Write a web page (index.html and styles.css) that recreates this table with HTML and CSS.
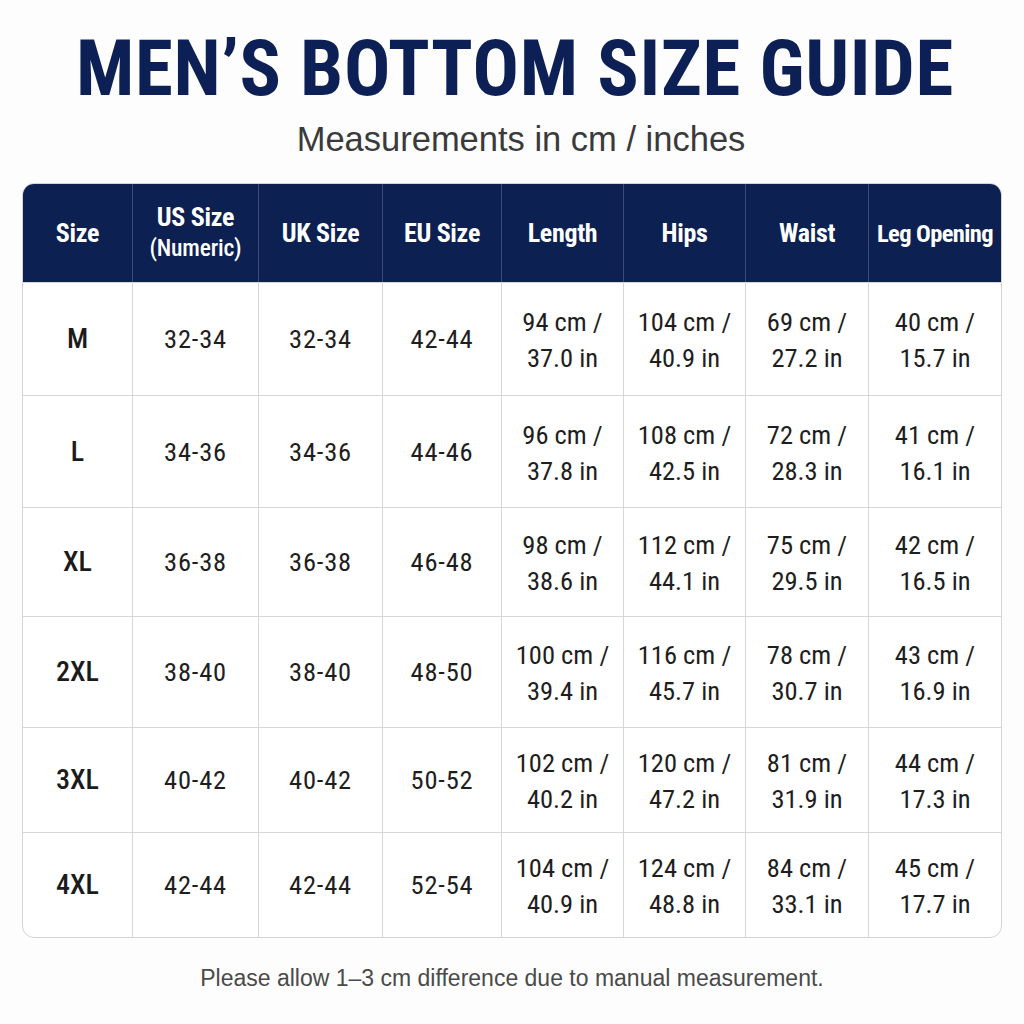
FILE: index.html
```html
<!DOCTYPE html>
<html>
<head>
<meta charset="utf-8">
<link rel="stylesheet" href="styles.css">
</head>
<body>
<div class="page">
  <h1 class="title"><span>MEN’S BOTTOM SIZE GUIDE</span></h1>
  <p class="subtitle">Measurements in cm / inches</p>
  <div class="table">
    <div class="row head">
      <div class="c">Size</div>
      <div class="c">US Size<br><span class="sub">(Numeric)</span></div>
      <div class="c">UK Size</div>
      <div class="c">EU Size</div>
      <div class="c">Length</div>
      <div class="c">Hips</div>
      <div class="c">Waist</div>
      <div class="c leg">Leg Opening</div>
    </div>
    <div class="row">
      <div class="c sz">M</div><div class="c r">32-34</div><div class="c r">32-34</div><div class="c r">42-44</div>
      <div class="c">94 cm /<br>37.0 in</div><div class="c">104 cm /<br>40.9 in</div><div class="c">69 cm /<br>27.2 in</div><div class="c">40 cm /<br>15.7 in</div>
    </div>
    <div class="row">
      <div class="c sz">L</div><div class="c r">34-36</div><div class="c r">34-36</div><div class="c r">44-46</div>
      <div class="c">96 cm /<br>37.8 in</div><div class="c">108 cm /<br>42.5 in</div><div class="c">72 cm /<br>28.3 in</div><div class="c">41 cm /<br>16.1 in</div>
    </div>
    <div class="row">
      <div class="c sz">XL</div><div class="c r">36-38</div><div class="c r">36-38</div><div class="c r">46-48</div>
      <div class="c">98 cm /<br>38.6 in</div><div class="c">112 cm /<br>44.1 in</div><div class="c">75 cm /<br>29.5 in</div><div class="c">42 cm /<br>16.5 in</div>
    </div>
    <div class="row">
      <div class="c sz">2XL</div><div class="c r">38-40</div><div class="c r">38-40</div><div class="c r">48-50</div>
      <div class="c">100 cm /<br>39.4 in</div><div class="c">116 cm /<br>45.7 in</div><div class="c">78 cm /<br>30.7 in</div><div class="c">43 cm /<br>16.9 in</div>
    </div>
    <div class="row">
      <div class="c sz">3XL</div><div class="c r">40-42</div><div class="c r">40-42</div><div class="c r">50-52</div>
      <div class="c">102 cm /<br>40.2 in</div><div class="c">120 cm /<br>47.2 in</div><div class="c">81 cm /<br>31.9 in</div><div class="c">44 cm /<br>17.3 in</div>
    </div>
    <div class="row">
      <div class="c sz">4XL</div><div class="c r">42-44</div><div class="c r">42-44</div><div class="c r">52-54</div>
      <div class="c">104 cm /<br>40.9 in</div><div class="c">124 cm /<br>48.8 in</div><div class="c">84 cm /<br>33.1 in</div><div class="c">45 cm /<br>17.7 in</div>
    </div>
  </div>
  <p class="note">Please allow 1–3 cm difference due to manual measurement.</p>
</div>
</body>
</html>
```
FILE: styles.css
```css
html, body {
  margin: 0;
  padding: 0;
  background: #fdfdfd;
}
.page {
  width: 1024px;
  height: 1024px;
  padding-top: 30px;
  box-sizing: border-box;
  display: flex;
  flex-direction: column;
  align-items: center;
}
.title {
  margin: 0;
  height: 78px;
  font-family: "Roboto Condensed", "Liberation Sans Narrow", "DejaVu Sans Condensed", "Liberation Sans", sans-serif;
  font-weight: 700;
  font-size: 77px;
  line-height: 78px;
  color: #0c2055;
  letter-spacing: 0.7px;
  padding-left: 6px;
}
.subtitle {
  margin: 11px 0 0 0;
  padding-left: 18px;
  font-family: "Liberation Sans", Arial, sans-serif;
  font-size: 34.5px;
  line-height: 40px;
  color: #3a3a3a;
}
.table {
  margin-top: 24px;
  width: 980px;
  border: 1.5px solid #d4d4d4;
  border-radius: 12px;
  overflow: hidden;
  box-sizing: border-box;
  background: #fff;
  font-family: "Roboto Condensed", "Liberation Sans Narrow", "DejaVu Sans Condensed", Roboto, sans-serif;
}
.row {
  display: grid;
  grid-template-columns: 109px 126px 124px 119px 122px 122px 123px 1fr;
  border-top: 1.5px solid #d6d6d6;
  box-sizing: border-box;
}
.row .c {
  display: flex;
  flex-direction: column;
  align-items: center;
  justify-content: center;
  text-align: center;
  border-left: 1.5px solid #d6d6d6;
  font-size: 26.5px;
  line-height: 36px;
  letter-spacing: 0;
  color: #1e1e1e;
  white-space: nowrap;
  padding-top: 2px;
  box-sizing: border-box;
}
.row .c.r { letter-spacing: 0.8px; padding-top: 0; }
.row .c:first-child { border-left: none; }
.row .sz { font-weight: 500; font-size: 28px; color: #1b1b1b; padding-top: 0; }
.head {
  border-top: none;
  background: #0c2151;
  height: 98px;
}
.head .c {
  display: block;
  padding-top: 0;
  display: flex;
  color: #fff;
  font-weight: 700;
  font-size: 26px;
  line-height: 31px;
  letter-spacing: -0.3px;
  border-left: 1px solid #3a4a72;
}
.head .sub {
  font-size: 23.5px;
  font-weight: 500;
  letter-spacing: -0.2px;
}
.head .leg {
  font-size: 24.5px;
  letter-spacing: -0.6px;
}
.row:nth-child(2) { height: 113px; }
.row:nth-child(3) { height: 112px; }
.row:nth-child(4) { height: 109px; }
.row:nth-child(5) { height: 111px; }
.row:nth-child(6) { height: 105px; }
.row:nth-child(7) { height: 105px; }
.note {
  margin: 27px 0 0 0;
  font-family: "Liberation Sans", Arial, sans-serif;
  font-size: 23px;
  color: #4a4a4a;
}
```
